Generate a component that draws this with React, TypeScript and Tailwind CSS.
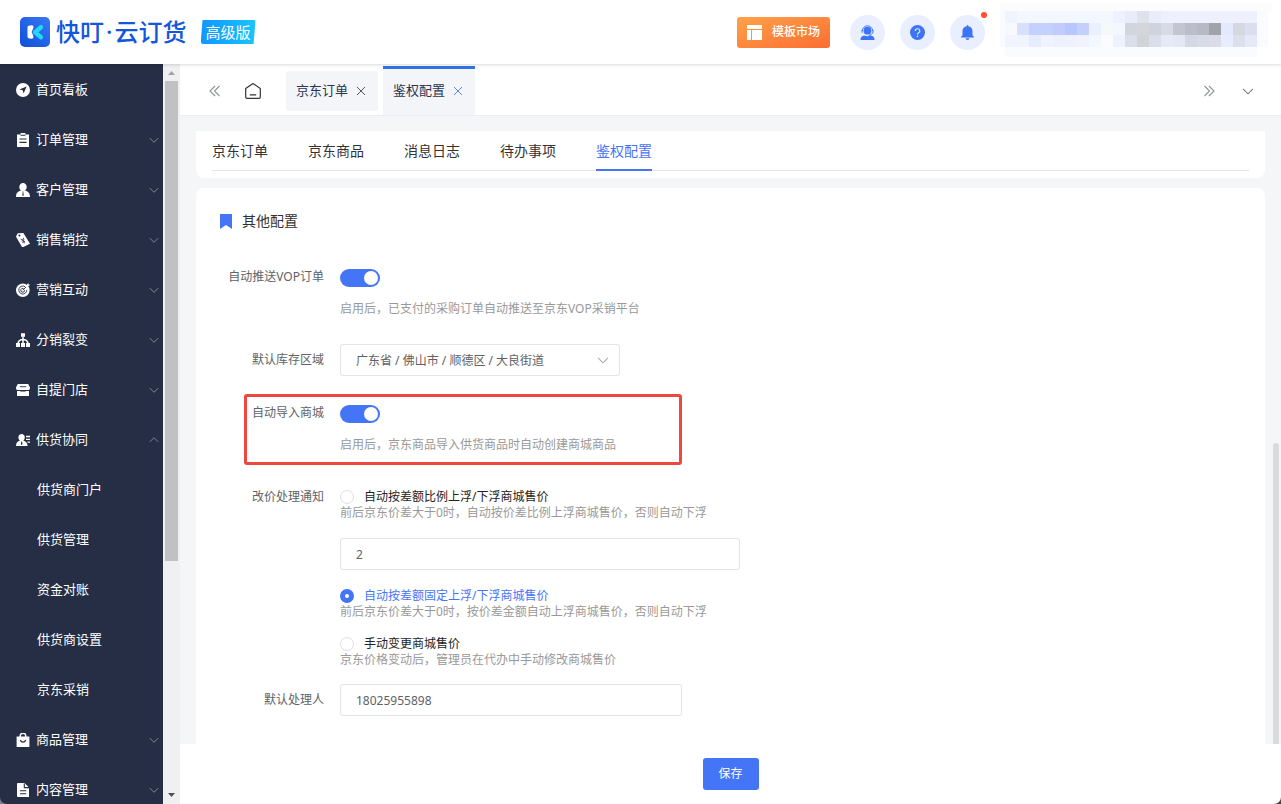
import { useState, type ReactNode } from "react";

function Icon({ children }: { children: ReactNode }) {
  return (
    <svg viewBox="0 0 14 14" className="size-3.5 shrink-0" fill="currentColor" aria-hidden="true">
      {children}
    </svg>
  );
}

const DARK = "#252e44";

const icons = {
  compass: (
    <Icon>
      <circle cx="7" cy="7" r="7" />
      <path d="M10.6 3.4 7.6 10.6 6.7 7.3 3.4 6.4z" fill={DARK} />
    </Icon>
  ),
  clipboard: (
    <Icon>
      <path d="M1 1.500h3.600V0h4.800v1.500H13V14H1z" />
      <path d="M4.600 1.800h4.800v1H4.600zM3.500 5.400h7v1.200h-7zM3.500 8.800h7V10h-7z" fill={DARK} />
    </Icon>
  ),
  customer: (
    <Icon>
      <path d="M7 0a3.700 3.700 0 0 1 3.700 3.900c0 1.600-.8 3-1.900 3.700C11.900 8.300 14 10 14 14H0c0-4 2.100-5.700 5.200-6.400C4.100 6.900 3.300 5.500 3.300 3.900A3.700 3.700 0 0 1 7 0z" />
      <path d="M6.500 8.500h1l-.2 1.200.5 2.500-.8.900-.8-.9.500-2.500z" fill={DARK} />
    </Icon>
  ),
  tag: (
    <Icon>
      <path d="M.2 3 1.800.2 7.400 0 14 10.800 6.300 14.500.2 4z" />
      <circle cx="3.400" cy="2.500" r="1" fill={DARK} />
      <path d="m4.700 6 2.200 1 .9-2.300M6.900 7l1.700 3.300M5.600 8.200l2.800-1.400M6.200 9.700 9 8.300" fill="none" stroke={DARK} strokeWidth=".8" />
    </Icon>
  ),
  target: (
    <Icon>
      <circle cx="6.800" cy="7.200" r="6.800" />
      <path d="M9 3.700A4 4 0 1 0 10.800 7M7.600 5.600a1.900 1.900 0 1 0 1 1.600" fill="none" stroke={DARK} strokeWidth=".9" />
      <path d="m6.800 7.200 4.500-4.500" stroke={DARK} strokeWidth=".9" />
      <path d="m10 2.600 2.300-2.500.3 1.500 1.400.2-2.400 2.400-1.500-.2z" />
    </Icon>
  ),
  tree: (
    <Icon>
      <path d="M5 .2h4v3.600H5zM0 10h4v4H0zM5 10h4v4H5zM10 10h4v4h-4z" />
      <path d="M7 3.500V10M2 10.500c.4-2.500 2-4 5-4s4.600 1.500 5 4" fill="none" stroke="currentColor" strokeWidth="1.500" />
    </Icon>
  ),
  store: (
    <Icon>
      <path d="M1.800 1h10.400L14 4.500c0 1.600-.6 2.300-1 2.500H1C.6 6.800 0 6.100 0 4.500zM1 8h12v5H1z" />
      <path d="M3.800 3.700h6.400M1 7.500h3l.8.6h4.400l.8-.6h3" fill="none" stroke={DARK} strokeWidth=".9" />
    </Icon>
  ),
  supplier: (
    <Icon>
      <path d="M5.600 1c1.900 0 3.200 1.400 3.200 3.200 0 1.400-.6 2.600-1.500 3.300C9.600 8.200 11.400 9.600 11.600 13H0C.1 9.600 1.600 8.200 4 7.500 3 6.800 2.400 5.600 2.400 4.200 2.400 2.400 3.700 1 5.600 1z" />
      <path d="M5.300 8.500h.8l.4 2.700-.8.900-.8-.9z" fill={DARK} />
      <path d="M10 3.500h4M10 6.300h4M11.500 9.100H14" stroke="currentColor" strokeWidth="1.300" />
    </Icon>
  ),
  bag: (
    <Icon>
      <path d="M.6 3.500h12.800V14H.6z" />
      <path d="M4.200 4V3a2.800 2.800 0 0 1 5.600 0v1" fill="none" stroke="currentColor" strokeWidth="1.400" />
      <path d="M4.300 7a2.800 2.800 0 0 0 5.400 0" fill="none" stroke={DARK} strokeWidth="1.200" />
    </Icon>
  ),
  doc: (
    <Icon>
      <path d="M1.800 0h6.700L13 4.400V14H1.800A.9.900 0 0 1 1 13.100V.9C1 .4 1.300 0 1.800 0z" />
      <path d="M8.300.5v4.100H13M4 7.800h6.300M4 10.800h6.300" fill="none" stroke={DARK} strokeWidth="1.100" />
    </Icon>
  ),
};

function Chevron({ className }: { className: string }) {
  return (
    <svg viewBox="0 0 12 12" className={className} fill="none" stroke="currentColor" strokeWidth="1.100" aria-hidden="true">
      <path d="m1 3.800 5 5 5-5" />
    </svg>
  );
}

function DoubleChevron({ className }: { className: string }) {
  return (
    <svg viewBox="0 0 12 12" className={className} fill="none" stroke="currentColor" strokeWidth="1.100" aria-hidden="true">
      <path d="m6 1-5 5 5 5M10.500 1l-5 5 5 5" />
    </svg>
  );
}

function Cross({ className }: { className: string }) {
  return (
    <svg viewBox="0 0 10 10" className={className} fill="none" stroke="currentColor" strokeWidth="1" aria-hidden="true">
      <path d="m1 1 8 8M9 1 1 9" />
    </svg>
  );
}

const PIXEL_ROWS = [
  "f0f4ff f3f7ff f3f7ff f3f7ff f3f7ff f3f7ff f3f7ff f3f7ff f3f7ff eef1ff e9edfb dfe2ec e9edfb eef0fe eef0fe eef0fe eef0fe eef0fe eef0fe eef0fe eef0fe",
  "f7f9fd d9e0fd c4d1fe c4d1fe c1ccfc b7c6fd c3d0fc e9f1fd f6f9f9 f3f7ff d2d4df d3d6da cfd3de d8dbe6 c3c5d0 bbbec9 b7bac5 a0a3aa e4eafb d5d8e3 d9dfed",
  "f1f4ff f1f4ff e5ecfe eff3ff eef0fe f0f1ff f0f3ff f3f7ff fbfcff eef2ff dbdeea d0d4d9 dbdeea e6e9f8 e4e7f5 d5d8e4 d5dbe7 dadce9 e7edff dde0ec e3e9f7",
].map((row) => row.split(" "));

function MaskedAccount() {
  return (
    <svg viewBox="0 0 272 54" className="h-[54px] w-[272px] shrink-0" shapeRendering="crispEdges" aria-hidden="true">
      <rect width="272" height="8" fill="#fcfcfd" />
      <rect y="8" width="268" height="36" fill="#fafbff" />
      <rect x="5" y="44" width="252" height="10" fill="#f9fbff" />
      {PIXEL_ROWS.map((row, r) =>
        row.map((color, c) => (
          <rect key={`${r}-${c}`} x={5 + c * 12} y={8 + r * 12} width="12" height="12" fill={`#${color}`} />
        )),
      )}
    </svg>
  );
}

function Header() {
  const round = "grid size-[35px] place-items-center rounded-full bg-[#e9effe] text-[#3d73f5]";
  return (
    <header className="relative z-10 flex h-16 shrink-0 items-center bg-white pl-5 pr-[9px] shadow-[0_1px_3px_rgba(0,0,0,0.15)]">
      <svg viewBox="0 0 30 30" className="size-[30px]" aria-hidden="true">
        <defs>
          <linearGradient id="logo" x1="1" y1="0" x2="0" y2="1">
            <stop offset="0" stopColor="#3a78f5" />
            <stop offset="1" stopColor="#0d4fd8" />
          </linearGradient>
        </defs>
        <rect width="30" height="30" rx="5" fill="url(#logo)" />
        <path d="M9.500 10.500v9M9.500 15l2-4.800M9.500 15l2 4.800" fill="none" stroke="#fff" strokeWidth="4" strokeLinecap="round" strokeLinejoin="round" />
        <path d="m21 10.200-6 5 6 5" fill="none" stroke="#20d8f6" strokeWidth="4.400" strokeLinecap="round" strokeLinejoin="round" />
      </svg>
      <span className="ml-1.5 text-2xl leading-8 font-medium text-[#1557da]">
        快叮<span className="px-0.5">·</span>云订货
      </span>
      <span className="ml-3.5 h-6 w-[55px] rounded-[2px] bg-linear-to-r from-[#1496ff] to-[#1cc4fd] text-center text-[15px] leading-6 text-white [clip-path:polygon(2px_0,100%_0,53px_100%,0_100%)]">
        高级版
      </span>
      <div className="ml-auto flex items-center">
        <button className="flex h-[31px] w-[93px] items-center rounded-[3px] bg-linear-to-br from-[#ffa149] to-[#fb6d32] pl-2.5 text-xs font-medium text-white">
          <svg viewBox="0 0 15 15" className="mr-[10px] size-[15px]" fill="#fff" aria-hidden="true">
            <path d="M0 0h15v4H0zM0 5h4v10H0zM5 5h10v10H5z" />
          </svg>
          模板市场
        </button>
        <button aria-label="客服" className={`ml-5 ${round}`}>
          <svg viewBox="0 0 16 16" className="size-[15px]" aria-hidden="true">
            <circle cx="8" cy="6" r="4.200" fill="currentColor" />
            <path d="M2.400 6.500a5.600 5.600 0 0 1 11.200 0M2.200 5.300v3M13.800 5.300v3M13.500 8c-.6 2-2 3-4.300 3.200" fill="none" stroke="currentColor" strokeWidth="1" />
            <path d="M.5 16c.1-3 1.500-4.300 4.300-4.700 2 .9 4.400.9 6.400 0 2.800.4 4.200 1.700 4.300 4.700z" fill="currentColor" />
          </svg>
        </button>
        <button aria-label="帮助" className={`ml-[15px] ${round}`}>
          <svg viewBox="0 0 16 16" className="size-[15px]" aria-hidden="true">
            <circle cx="8" cy="8" r="8" fill="currentColor" />
            <path d="M5.500 6.300a2.500 2.300 0 1 1 3.700 2c-.9.500-1.200.9-1.200 1.900" fill="none" stroke="#e9effe" strokeWidth="1.200" />
            <circle cx="8" cy="12" r=".8" fill="#e9effe" />
          </svg>
        </button>
        <button aria-label="通知" className={`relative ml-[15px] ${round}`}>
          <svg viewBox="0 0 16 16" className="size-[15px]" fill="currentColor" aria-hidden="true">
            <path d="M7.200 1.200V.8a.8.800 0 0 1 1.600 0v.4c2.600.4 4.500 2.500 4.500 5v4.700l1.500 1.600v.9H1.200v-.9l1.500-1.600V6.200c0-2.500 1.900-4.600 4.500-5zM6 14.200h4a2 1.700 0 0 1-4 0z" />
          </svg>
          <span className="absolute -top-[3px] -right-0.5 size-1.5 rounded-full bg-[#ff4d2d]" />
        </button>
        <div className="ml-[15px] -mt-1">
          <MaskedAccount />
        </div>
      </div>
    </header>
  );
}

type MenuItem = { label: string; icon: ReactNode; children?: string[]; leaf?: boolean };

const MENU: MenuItem[] = [
  { label: "首页看板", icon: icons.compass, leaf: true },
  { label: "订单管理", icon: icons.clipboard },
  { label: "客户管理", icon: icons.customer },
  { label: "销售销控", icon: icons.tag },
  { label: "营销互动", icon: icons.target },
  { label: "分销裂变", icon: icons.tree },
  { label: "自提门店", icon: icons.store },
  {
    label: "供货协同",
    icon: icons.supplier,
    children: ["供货商门户", "供货管理", "资金对账", "供货商设置", "京东采销"],
  },
  { label: "商品管理", icon: icons.bag },
  { label: "内容管理", icon: icons.doc },
];

function Sidebar() {
  return (
    <aside className="flex w-[180px] shrink-0">
      <nav className="flex-1 overflow-hidden bg-[#252e44] pt-px text-[13px] text-white">
        <ul>
          {MENU.map((item) => (
            <li key={item.label}>
              <button className="flex h-[50px] w-full items-center pr-1 pl-4">
                {item.icon}
                <span className="ml-1.5">{item.label}</span>
                {!item.leaf && (
                  <Chevron
                    className={`ml-auto size-2.5 text-[#8a8e98] ${item.children ? "rotate-180" : ""}`}
                  />
                )}
              </button>
              {item.children && (
                <ul>
                  {item.children.map((child) => (
                    <li key={child}>
                      <a href="#" className="flex h-[50px] items-center pl-[37px]">
                        {child}
                      </a>
                    </li>
                  ))}
                </ul>
              )}
            </li>
          ))}
        </ul>
      </nav>
      <div className="flex w-[17px] flex-col items-center bg-[#f0f0f0]" aria-hidden="true">
        <svg viewBox="0 0 17 17" className="size-[17px] shrink-0">
          <path d="m5 11 3.500-4 3.500 4z" fill="#a3a3a3" />
        </svg>
        <div className="min-h-0 w-[13px] flex-1">
          <div className="h-[68%] bg-[#c1c1c1]" />
        </div>
        <svg viewBox="0 0 17 17" className="size-[17px] shrink-0">
          <path d="m5 6 3.500 4L12 6z" fill="#505050" />
        </svg>
      </div>
    </aside>
  );
}

function PageTabs() {
  return (
    <div className="flex h-[52px] shrink-0 items-center border-b border-[#ebedf0] bg-white pt-0.5 pr-[27px] pl-[29px] text-[#8f9399]">
      <button aria-label="向左滚动">
        <DoubleChevron className="size-3" />
      </button>
      <button aria-label="首页" className="ml-6 text-[#333]">
        <svg viewBox="0 0 16 16" className="size-4" fill="none" stroke="currentColor" strokeWidth="1.200" aria-hidden="true">
          <path d="M.7 5.600 7.300.9a1.200 1.200 0 0 1 1.400 0l6.600 4.700v8.300c0 .8-.6 1.400-1.400 1.400H2.100c-.8 0-1.400-.6-1.400-1.400zM4.800 11.800h6.400" />
        </svg>
      </button>
      <div className="ml-[25px] flex h-10 w-[92px] items-center rounded-[3px] bg-[#f4f5f8] pl-2.5 text-[13px] text-[#2a3450]">
        <a href="#">京东订单</a>
        <button aria-label="关闭京东订单" className="ml-2 text-[#555]">
          <Cross className="size-2.5" />
        </button>
      </div>
      <div className="ml-[5px] flex h-full w-[92px] items-center border-t-3 border-[#2f74e8] bg-[#f4f5f8] pb-0.5 pl-2.5 text-[13px] text-[#2a3450]">
        <a href="#">鉴权配置</a>
        <button aria-label="关闭鉴权配置" className="ml-2 text-[#5b87f0]">
          <Cross className="size-2.5" />
        </button>
      </div>
      <button aria-label="向右滚动" className="ml-auto">
        <DoubleChevron className="size-3 rotate-180" />
      </button>
      <button aria-label="更多标签" className="ml-[27px] text-[#777]">
        <Chevron className="size-3" />
      </button>
    </div>
  );
}

const SECTIONS = ["京东订单", "京东商品", "消息日志", "待办事项", "鉴权配置"];

function SectionTabs() {
  return (
    <div className="shrink-0 rounded-b-lg bg-white px-4 pb-[7px]">
      <nav className="flex h-10 gap-10 border-b border-[#e4e5e8] text-sm text-[#333]">
        {SECTIONS.map((s) => (
          <a
            key={s}
            href="#"
            className={`flex h-10 items-center border-y-2 border-t-transparent ${
              s === "鉴权配置" ? "border-b-[#4475f6] text-[#4475f6]" : "border-b-transparent"
            }`}
          >
            {s}
          </a>
        ))}
      </nav>
    </div>
  );
}

function Switch({ id }: { id: string }) {
  return (
    <input
      id={id}
      type="checkbox"
      role="switch"
      defaultChecked
      className="flex h-[18px] w-10 appearance-none items-center rounded-full bg-[#c0c4cc] px-0.5 before:size-3.5 before:rounded-full before:bg-white checked:justify-end checked:bg-[#4475f6]"
    />
  );
}

function SwitchRow({ id, label, hint, marked }: { id: string; label: string; hint: string; marked?: boolean }) {
  return (
    <div className="relative flex gap-4">
      <label htmlFor={id} className="w-32 text-right leading-[22px] text-[#606266]">
        {label}
      </label>
      <div className="pt-[3px]">
        <Switch id={id} />
        <p className="mt-[13px] leading-[18px] text-[#999]">{hint}</p>
      </div>
      {marked && (
        <div className="pointer-events-none absolute -top-2 -bottom-[11px] left-12 w-[438px] rounded-[3px] border-3 border-[#ee473d]" />
      )}
    </div>
  );
}

const MODES = [
  { id: "ratio", label: "自动按差额比例上浮/下浮商城售价", hint: "前后京东价差大于0时，自动按价差比例上浮商城售价，否则自动下浮" },
  { id: "fixed", label: "自动按差额固定上浮/下浮商城售价", hint: "前后京东价差大于0时，按价差金额自动上浮商城售价，否则自动下浮" },
  { id: "manual", label: "手动变更商城售价", hint: "京东价格变动后，管理员在代办中手动修改商城售价" },
];

const FIELD = "h-8 rounded-[3px] border border-[#e2e4e8] bg-white px-[15px] text-[#606266] outline-none";

function ConfigForm() {
  const [mode, setMode] = useState("fixed");
  return (
    <form className="min-h-0 flex-1 overflow-hidden rounded-t-lg bg-white text-xs">
      <h2 className="flex h-[66px] items-center pl-6 text-sm text-[#333]">
        <svg viewBox="0 0 12 15" className="mr-2.5 h-[15px] w-3" fill="#4475f6" aria-hidden="true">
          <path d="M0 0h12v15l-6-4-6 4z" />
        </svg>
        其他配置
      </h2>
      <div className="flex flex-col gap-[26px] pt-3">
        <SwitchRow id="push" label="自动推送VOP订单" hint="启用后，已支付的采购订单自动推送至京东VOP采销平台" />
        <div className="flex gap-4">
          <label htmlFor="region" className="w-32 text-right leading-8 text-[#606266]">
            默认库存区域
          </label>
          <div className="relative w-[280px]">
            <select id="region" className={`w-full appearance-none pt-0.5 ${FIELD}`}>
              <option>广东省 / 佛山市 / 顺德区 / 大良街道</option>
            </select>
            <Chevron className="pointer-events-none absolute top-2.5 right-[11px] size-3 text-[#a8abb2]" />
          </div>
        </div>
        <SwitchRow id="import" label="自动导入商城" hint="启用后，京东商品导入供货商品时自动创建商城商品" marked />
        <div className="flex gap-4" role="radiogroup" aria-labelledby="mode-label">
          <span id="mode-label" className="w-32 text-right leading-[34px] text-[#606266]">
            改价处理通知
          </span>
          <div className="flex flex-col gap-4 pt-[9px]">
            {MODES.map((m) => (
              <div key={m.id}>
                <label
                  className={`flex items-center gap-2.5 leading-4 ${mode === m.id ? "text-[#4475f6]" : "text-[#222]"}`}
                >
                  <input
                    type="radio"
                    name="mode"
                    checked={mode === m.id}
                    onChange={() => setMode(m.id)}
                    className="size-3.5 appearance-none rounded-full border border-[#dcdfe6] bg-white checked:border-5 checked:border-[#4475f6]"
                  />
                  {m.label}
                </label>
                <p className="leading-4 text-[#999]">{m.hint}</p>
                {m.id === "ratio" && (
                  <input aria-label="浮动数值" defaultValue="2" className={`mt-[17px] mb-[18px] block w-[400px] ${FIELD}`} />
                )}
              </div>
            )).map((node, i) => (
              <div key={i} className={i === 0 ? "-mb-4" : ""}>
                {node}
              </div>
            ))}
          </div>
        </div>
      </div>
      <div className="flex gap-4 pt-4">
        <label htmlFor="handler" className="w-32 text-right leading-8 text-[#606266]">
          默认处理人
        </label>
        <input id="handler" defaultValue="18025955898" className={`w-[342px] ${FIELD}`} />
      </div>
    </form>
  );
}

export default function App() {
  return (
    <div className="relative flex h-screen flex-col overflow-hidden bg-white font-['Noto_Sans','Noto_Sans_CJK_SC',sans-serif]">
      <Header />
      <div className="flex min-h-0 flex-1">
        <Sidebar />
        <div className="flex min-w-0 flex-1 flex-col">
          <PageTabs />
          <main className="relative flex min-h-0 flex-1 flex-col gap-2.5 bg-[#f5f6f8] px-4 pt-[15px]">
            <SectionTabs />
            <ConfigForm />
            <div className="absolute right-0.5 bottom-0 h-[48%] w-1.5 rounded-t-full bg-[#d9dadc]" />
          </main>
          <footer className="flex h-[60px] shrink-0 items-center justify-center bg-white">
            <button className="h-8 w-14 rounded-[3px] bg-[#4475f6] text-xs text-white">保存</button>
          </footer>
        </div>
      </div>
      <svg viewBox="0 0 8 8" className="absolute bottom-0 left-0 size-2" aria-hidden="true">
        <path d="M0 1a7 7 0 0 0 7 7H0z" fill="#7b7f88" />
      </svg>
      <svg viewBox="0 0 8 8" className="absolute right-0 bottom-0 size-2" aria-hidden="true">
        <path d="M8 1a7 7 0 0 1-7 7h7z" fill="#444" />
      </svg>
    </div>
  );
}
